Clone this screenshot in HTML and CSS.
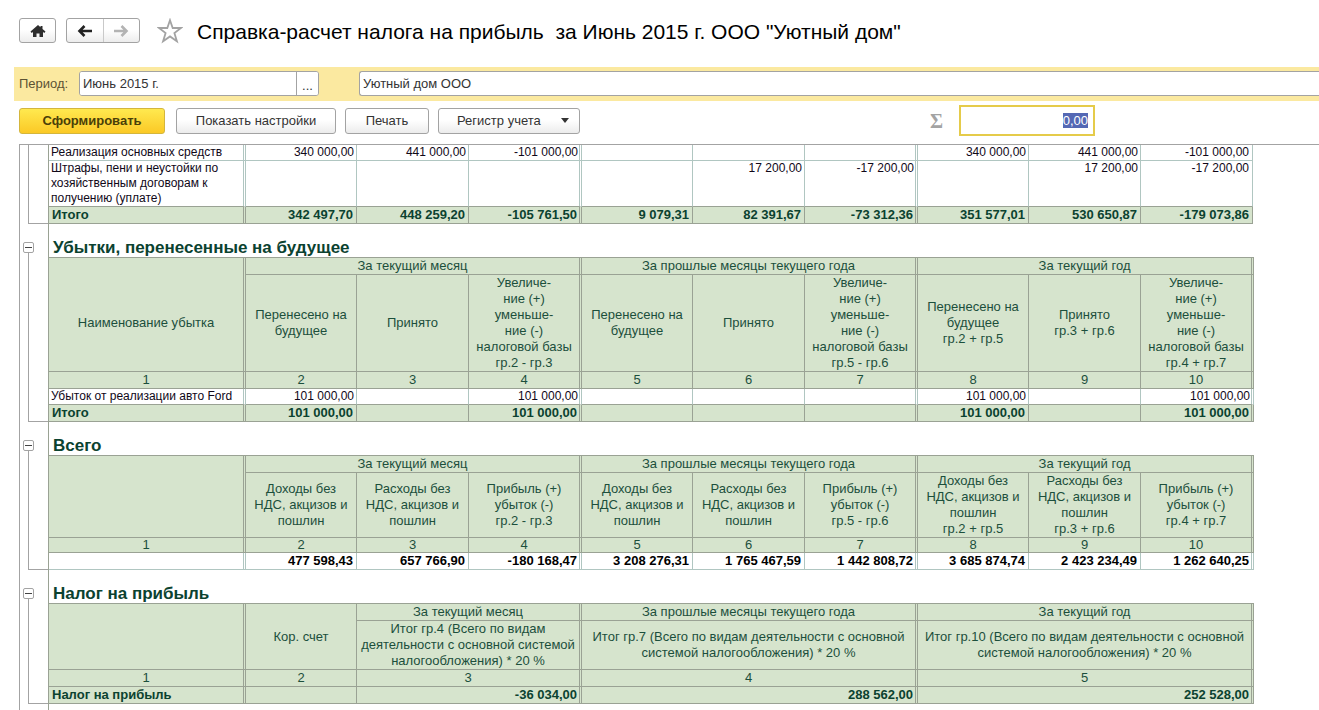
FILE: index.html
```html
<!DOCTYPE html>
<html lang="ru">
<head>
<meta charset="utf-8">
<title>Справка-расчет налога на прибыль</title>
<link rel="stylesheet" href="styles.css">
</head>
<body>
<header class="titlebar">
  <button class="btn nav-btn" aria-label="Домой"><svg width="16" height="14" viewBox="0 0 16 14"><path d="M8 1 .5 7.500 1.700 9 3 8v5h3.500V9.500h3V13H13V8l1.300 1 1.200-1.500L12.500 5V2h-2v1.200z" fill="#2e2e2e"/></svg></button>
  <div class="nav-pair">
    <button aria-label="Назад"><svg width="16" height="12" viewBox="0 0 16 12"><path d="M15 6H3M7.500 1 2.500 6l5 5" fill="none" stroke="#222" stroke-width="2.600"/></svg></button>
    <button aria-label="Вперед"><svg width="16" height="12" viewBox="0 0 16 12"><path d="M1 6h12M8.500 1l5 5-5 5" fill="none" stroke="#b3b3b3" stroke-width="2.600"/></svg></button>
  </div>
  <button class="star" aria-label="В избранное"><svg width="26" height="26" viewBox="0 0 26 26"><path d="M13 2.200 15.700 10H24l-6.600 5 2.500 8.300L13 18.400l-6.900 4.900L8.600 15 2 10h8.300z" fill="#fff" stroke="#a3a3a3" stroke-width="1.800"/></svg></button>
  <h1>Справка-расчет налога на прибыль&nbsp; за Июнь 2015 г. ООО "Уютный дом"</h1>
</header>

<div class="filter">
  <label for="period">Период:</label>
  <div class="combo">
    <input id="period" type="text" value="Июнь 2015 г.">
    <button aria-label="Выбрать период">...</button>
  </div>
  <input class="org" type="text" aria-label="Организация" value="Уютный дом ООО">
</div>

<div class="toolbar">
  <button class="btn primary">Сформировать</button>
  <button class="btn settings">Показать настройки</button>
  <button class="btn print">Печать</button>
  <button class="btn register">Регистр учета <svg width="8" height="5" viewBox="0 0 8 5"><path d="M0 0h8L4 5z" fill="#333"/></svg></button>
  <label class="sigma" for="sum">Σ</label>
  <input class="sum" id="sum" type="text" value="0,00">
</div>

<main class="sheet">
  <section class="group">
    <div class="gutter"><div class="bracket"></div></div>
    <div class="content">
      <table class="grid first">
        <colgroup><col class="name"><col class="a"><col class="b"><col class="c"><col class="a"><col class="b"><col class="c"><col class="a"><col class="b"><col class="b"></colgroup>
        <tbody>
          <tr><td>Реализация основных средств</td><td>340 000,00</td><td>441 000,00</td><td>-101 000,00</td><td></td><td></td><td></td><td>340 000,00</td><td>441 000,00</td><td>-101 000,00</td></tr>
          <tr class="last"><td>Штрафы, пени и неустойки по хозяйственным договорам к получению (уплате)</td><td></td><td></td><td></td><td></td><td>17 200,00</td><td>-17 200,00</td><td></td><td>17 200,00</td><td>-17 200,00</td></tr>
          <tr class="total"><td>Итого</td><td>342 497,70</td><td>448 259,20</td><td>-105 761,50</td><td>9 079,31</td><td>82 391,67</td><td>-73 312,36</td><td>351 577,01</td><td>530 650,87</td><td>-179 073,86</td></tr>
        </tbody>
      </table>
    </div>
  </section>

  <section class="group">
    <div class="gutter"><button class="toggle" aria-label="Свернуть"></button><div class="bracket"></div></div>
    <div class="content">
      <h2>Убытки, перенесенные на будущее</h2>
      <table class="grid">
        <colgroup><col class="name"><col class="a"><col class="b"><col class="c"><col class="a"><col class="b"><col class="c"><col class="a"><col class="b"><col class="c"></colgroup>
        <thead>
          <tr><th rowspan="2" class="dbl name-head">Наименование убытка</th><th colspan="3" class="dbl">За текущий месяц</th><th colspan="3" class="dbl">За прошлые месяцы текущего года</th><th colspan="3" class="dbl">За текущий год</th></tr>
          <tr><th>Перенесено на будущее</th><th>Принято</th><th class="dbl">Увеличе-<br>ние (+)<br>уменьше-<br>ние (-)<br>налоговой базы<br>гр.2 - гр.3</th><th>Перенесено на будущее</th><th>Принято</th><th class="dbl">Увеличе-<br>ние (+)<br>уменьше-<br>ние (-)<br>налоговой базы<br>гр.5 - гр.6</th><th>Перенесено на будущее<br>гр.2 + гр.5</th><th>Принято<br>гр.3 + гр.6</th><th class="dbl">Увеличе-<br>ние (+)<br>уменьше-<br>ние (-)<br>налоговой базы<br>гр.4 + гр.7</th></tr>
          <tr class="nums"><th class="dbl">1</th><th>2</th><th>3</th><th class="dbl">4</th><th>5</th><th>6</th><th class="dbl">7</th><th>8</th><th>9</th><th class="dbl">10</th></tr>
        </thead>
        <tbody>
          <tr class="last"><td>Убыток от реализации авто Ford</td><td>101 000,00</td><td></td><td>101 000,00</td><td></td><td></td><td></td><td>101 000,00</td><td></td><td>101 000,00</td></tr>
          <tr class="total"><td>Итого</td><td>101 000,00</td><td></td><td>101 000,00</td><td></td><td></td><td></td><td>101 000,00</td><td></td><td>101 000,00</td></tr>
        </tbody>
      </table>
    </div>
  </section>

  <section class="group">
    <div class="gutter"><button class="toggle" aria-label="Свернуть"></button><div class="bracket"></div></div>
    <div class="content">
      <h2>Всего</h2>
      <table class="grid compact">
        <colgroup><col class="name"><col class="a"><col class="b"><col class="c"><col class="a"><col class="b"><col class="c"><col class="a"><col class="b"><col class="c"></colgroup>
        <thead>
          <tr><th rowspan="2" class="dbl"></th><th colspan="3" class="dbl">За текущий месяц</th><th colspan="3" class="dbl">За прошлые месяцы текущего года</th><th colspan="3" class="dbl">За текущий год</th></tr>
          <tr><th>Доходы без НДС, акцизов и пошлин</th><th>Расходы без НДС, акцизов и пошлин</th><th class="dbl">Прибыль (+)<br>убыток (-)<br>гр.2 - гр.3</th><th>Доходы без НДС, акцизов и пошлин</th><th>Расходы без НДС, акцизов и пошлин</th><th class="dbl">Прибыль (+)<br>убыток (-)<br>гр.5 - гр.6</th><th>Доходы без НДС, акцизов и пошлин<br>гр.2 + гр.5</th><th>Расходы без НДС, акцизов и пошлин<br>гр.3 + гр.6</th><th class="dbl">Прибыль (+)<br>убыток (-)<br>гр.4 + гр.7</th></tr>
          <tr class="nums"><th class="dbl">1</th><th>2</th><th>3</th><th class="dbl">4</th><th>5</th><th>6</th><th class="dbl">7</th><th>8</th><th>9</th><th class="dbl">10</th></tr>
        </thead>
        <tbody>
          <tr class="sum-row"><td></td><td>477 598,43</td><td>657 766,90</td><td>-180 168,47</td><td>3 208 276,31</td><td>1 765 467,59</td><td>1 442 808,72</td><td>3 685 874,74</td><td>2 423 234,49</td><td>1 262 640,25</td></tr>
        </tbody>
      </table>
    </div>
  </section>

  <section class="group">
    <div class="gutter"><button class="toggle" aria-label="Свернуть"></button><div class="bracket"></div></div>
    <div class="content">
      <h2>Налог на прибыль</h2>
      <table class="grid tax">
        <colgroup><col class="name"><col class="a"><col class="b"><col class="c"><col class="a"><col class="b"><col class="c"><col class="a"><col class="b"><col class="c"></colgroup>
        <thead>
          <tr><th rowspan="2" class="dbl"></th><th rowspan="2">Кор. счет</th><th colspan="2" class="dbl">За текущий месяц</th><th colspan="3" class="dbl">За прошлые месяцы текущего года</th><th colspan="3" class="dbl">За текущий год</th></tr>
          <tr><th colspan="2" class="dbl">Итог гр.4 (Всего по видам деятельности с основной системой налогообложения) * 20 %</th><th colspan="3" class="dbl">Итог гр.7 (Всего по видам деятельности с основной системой налогообложения) * 20 %</th><th colspan="3" class="dbl">Итог гр.10 (Всего по видам деятельности с основной системой налогообложения) * 20 %</th></tr>
          <tr><th class="dbl">1</th><th>2</th><th colspan="2" class="dbl">3</th><th colspan="3" class="dbl">4</th><th colspan="3" class="dbl">5</th></tr>
        </thead>
        <tbody>
          <tr class="total"><td class="dbl">Налог на прибыль</td><td></td><td colspan="2" class="dbl">-36 034,00</td><td colspan="3" class="dbl">288 562,00</td><td colspan="3" class="dbl">252 528,00</td></tr>
        </tbody>
      </table>
    </div>
  </section>
</main>
<script src="script.js"></script>
</body>
</html>
```

FILE: script.js
```js
const sum = document.getElementById('sum');
sum.focus();
sum.select();
```

FILE: styles.css
```css
* { box-sizing: border-box; }
body {
  margin: 0;
  height: 100vh;
  display: flex;
  flex-direction: column;
  overflow: hidden;
  background: #fff;
  color: #333;
  font: 13px/16px "Liberation Sans", Arial, sans-serif;
}
button, input { font: inherit; color: inherit; margin: 0; padding: 0; }
button { white-space: nowrap; }

.btn, .nav-pair {
  border: 1px solid #a3a3a3;
  border-radius: 3px;
  background: linear-gradient(#fff, #fff 45%, #ececec);
}
.titlebar { display: flex; align-items: center; height: 67px; padding: 0 19px 6px; flex: none; }
.nav-btn { width: 37px; height: 25px; display: grid; place-items: center; margin-right: 10px; }
.nav-pair { display: flex; width: 74px; height: 25px; }
.nav-pair button { flex: 1; border: 0; background: none; display: grid; place-items: center; }
.nav-pair button + button { border-left: 1px solid #c9c9c9; }
.star { border: 0; background: none; width: 26px; height: 26px; margin: 0 14px 0 17px; }
.star svg { display: block; }
h1 { margin: 0; font-size: 21px; line-height: 24px; font-weight: normal; color: #000; white-space: nowrap; padding-top: 2px; }

.filter {
  display: flex;
  align-items: center;
  flex: none;
  height: 34px;
  margin-left: 14px;
  padding: 0 0 1px 5px;
  background: #fbe9a0;
  overflow: hidden;
}
.filter label { width: 60px; color: #5c5334; flex: none; }
.combo { display: flex; width: 240px; height: 25px; border: 1px solid #a3a3a3; border-radius: 3px; background: #fff; margin-right: 40px; flex: none; overflow: hidden; }
.combo input { flex: 1; min-width: 0; border: 0; padding-left: 3px; }
.combo button { width: 22px; border: 0; border-left: 1px solid #a3a3a3; background: #fff; padding-top: 4px; }
.org { flex: 1; height: 25px; border: 1px solid #a3a3a3; border-right: 0; border-radius: 3px 0 0 3px; padding-left: 3px; background: #fff; }

.toolbar { display: flex; align-items: center; flex: none; height: 43px; padding: 0 19px 4px; }
.toolbar .btn { height: 26px; }
.toolbar .primary {
  width: 146px;
  margin-right: 11px;
  font-weight: bold;
  color: #4a3f08;
  border-color: #d4b63c;
  background: linear-gradient(#ffe94f, #fbc926);
}
.settings { width: 160px; margin-right: 9px; }
.print { width: 84px; margin-right: 9px; }
.register { width: 142px; display: flex; align-items: center; justify-content: space-between; padding: 0 10px 0 18px; }
.sigma { margin-left: 350px; width: 29px; font: bold 20px/24px "Liberation Serif", serif; color: #a3a3a3; }
.sum { width: 136px; height: 31px; border: 2px solid #e5cb4a; background: #fff; text-align: right; padding-right: 5px; outline: 0; }
.sum::selection { background: #5468b4; color: #fff; }

.sheet { flex: 1; min-height: 0; margin-left: 19px; border-left: 1px solid #a3a3a3; border-top: 1px solid #a3a3a3; overflow: hidden; display: flex; flex-direction: column; }
.group { display: flex; flex: none; }
.gutter { width: 28px; flex: none; display: flex; flex-direction: column; padding-bottom: 14px; }
.toggle { width: 11px; height: 11px; margin: 4px 0 0 3px; border: 1px solid #a3a3a3; border-radius: 2px; background: linear-gradient(#444, #444) center / 7px 1px no-repeat #fff; }
.bracket { flex: 1; margin-left: 8px; border-left: 1px solid #a3a3a3; border-bottom: 1px solid #a3a3a3; }
.content { flex: 1; border-left: 1px solid #9aa294; padding-bottom: 14px; }
h2 { margin: 0; height: 19px; padding-left: 4px; font-size: 17px; line-height: 19px; color: #0b4230; }

.grid { --line: #9aa294; --soft-line: #b0c6c1; border-collapse: separate; border-spacing: 0; table-layout: fixed; width: 1205px; border-top: 1px solid var(--line); }
.grid.first { width: 1204px; border-top: 0; }
.name { width: 197px; }
.a { width: 111px; }
.b { width: 112px; }
.c { width: 113px; }
th, td { border: 0 solid var(--line); border-width: 0 1px 1px 0; }
th { padding: 0 5px; font-weight: normal; color: #1c4f3c; background: #d6e4cd; text-align: center; vertical-align: middle; }
.tax th { padding: 0 1px; }
.name-head { padding-top: 16px; }
td { padding: 0 2px 0 0; font-size: 12px; line-height: 15px; height: 16px; color: #100818; text-align: right; vertical-align: top; border-color: var(--soft-line); }
td:first-child { text-align: left; padding-left: 2px; }
.total td, .sum-row td { padding-right: 3px; font-size: 13px; line-height: 16px; height: 17px; font-weight: bold; }
.total td { background: #d6e4cd; color: #0b4230; border-color: var(--line); }
.total td:first-child { padding-left: 3px; }
.sum-row td { color: #000; }
.last td { border-bottom-color: var(--line); }
.dbl,
.grid:not(.tax) td:nth-child(3n+1) { border-right-width: 3px; border-right-style: double; }
.grid td:nth-child(3n+1) { padding-right: 1px; }
.grid .total td.dbl, .grid .total td:nth-child(3n+1), .grid .sum-row td:nth-child(3n+1) { padding-right: 2px; }
.grid.first td:last-child { border-right-width: 1px; border-right-style: solid; padding-right: 3px; }
.compact .nums th { line-height: 14px; }
```
